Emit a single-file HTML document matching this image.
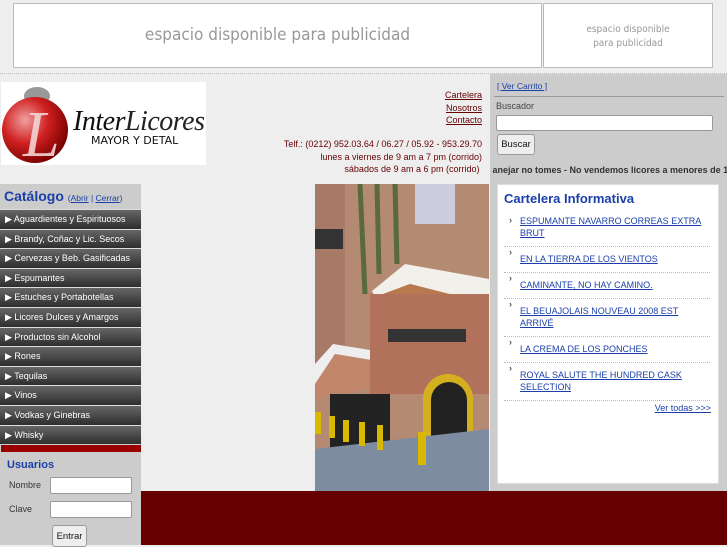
<!DOCTYPE html>
<html><head><meta charset="utf-8"><style>
*{margin:0;padding:0;box-sizing:border-box}
body{width:727px;height:545px;overflow:hidden;background:#eeeeee;font-family:"Liberation Sans",sans-serif;position:relative;font-size:9px}
.abs{position:absolute}
.ban{background:#fff;border:1px solid #bbb;color:#999;text-align:center;font-family:"DejaVu Sans Condensed","Liberation Sans Narrow",sans-serif}
.menu div{height:19.6px;border-top:1px solid #ddd;background:linear-gradient(#666,#2e2e2e);color:#fff;font-size:9px;line-height:18px;padding-left:5px;white-space:nowrap}
.hl{color:#660000;text-decoration:underline;font-size:9px}
.news li{list-style:none;position:relative;padding:0 0 0 16px;border-bottom:1px dotted #bbb;font-size:9px;line-height:12px;color:#1a3fa8;text-decoration:underline}
.news li:before{content:"›";position:absolute;left:5px;top:-1px;color:#555;font-weight:bold;display:inline-block;text-decoration:none}
input.t{background:#fff;border:1px solid #999;border-radius:2px}
.btn{background:#eee;border:1px solid #999;border-radius:3px;font-size:9.5px;text-align:center;color:#111}
</style></head><body>
<div class="abs ban" style="left:13px;top:3px;width:529px;height:65px;font-size:17px;line-height:63px">espacio disponible para publicidad</div>
<div class="abs ban" style="left:543px;top:3px;width:170px;height:65px;font-size:10px;line-height:14px;padding-top:19px">espacio disponible<br>para publicidad</div>
<div class="abs" style="left:0;top:73px;width:727px;border-top:1px dotted #bbb"></div>
<div class="abs" style="left:490px;top:74px;width:237px;height:418px;background:#cccccc"></div>
<div class="abs" style="left:497px;top:81px;font-size:8.5px;color:#1a3fa8;text-decoration:underline">[ Ver Carrito ]</div>
<div class="abs" style="left:494px;top:96px;width:230px;border-top:1px solid #999"></div>
<div class="abs" style="left:496px;top:101px;font-size:9px;color:#444">Buscador</div>
<input class="abs t" style="left:496px;top:115px;width:217px;height:16px">
<div class="abs btn" style="left:497px;top:134px;width:38px;height:21px;line-height:20px">Buscar</div>
<div class="abs" style="left:490px;top:165px;width:237px;overflow:hidden;white-space:nowrap;font-size:9px;font-weight:bold;color:#333">&nbsp;anejar no tomes - No vendemos licores a menores de 18</div>

<div class="abs" style="left:1px;top:82px;width:205px;height:83px;background:#fff;overflow:hidden">
<svg width="205" height="83"><defs><radialGradient id="g" cx="0.35" cy="0.35" r="0.7"><stop offset="0" stop-color="#f0a0a0"/><stop offset="0.5" stop-color="#d02020"/><stop offset="1" stop-color="#700"/></radialGradient></defs>
<ellipse cx="36" cy="14" rx="13" ry="9" fill="#999"/><circle cx="34" cy="48" r="33" fill="url(#g)"/>
<text x="22" y="74" font-family="Liberation Serif" font-size="66" font-style="italic" fill="#f4d4d4" opacity=".9">L</text>
<text x="72" y="48" font-family="Liberation Serif" font-style="italic" font-size="28" fill="#111" textLength="132">Inter<tspan fill="#222">Licores</tspan></text>
<text x="90" y="62" font-family="DejaVu Sans" font-size="11" fill="#111">MAYOR Y DETAL</text></svg></div>
<div class="abs" style="right:245px;top:89px;text-align:right;line-height:12.5px"><div class="hl">Cartelera</div><div class="hl">Nosotros</div><div class="hl">Contacto</div></div>
<div class="abs" style="right:245px;top:138px;text-align:right;line-height:12.5px;font-size:9px;color:#660000">Telf.: (0212) 952.03.64 / 06.27 / 05.92 - 953.29.70<br>lunes a viernes de 9 am a 7 pm (corrido)<br>sábados de 9 am a 6 pm (corrido)&nbsp;</div>

<div class="abs" style="left:0;top:184px;width:141px;height:361px;background:#cccccc"></div>
<div class="abs" style="left:4px;top:188px;font-size:14px;font-weight:bold;color:#1a3fa8">Catálogo <span style="font-size:8.5px;font-weight:normal;color:#1a3fa8">(<u>Abrir</u> | <u>Cerrar</u>)</span></div>
<div class="abs menu" style="left:0;top:209px;width:141px">
<div>▶ Aguardientes y Espirituosos</div><div>▶ Brandy, Coñac y Lic. Secos</div><div>▶ Cervezas y Beb. Gasificadas</div><div>▶ Espumantes</div><div>▶ Estuches y Portabotellas</div><div>▶ Licores Dulces y Amargos</div><div>▶ Productos sin Alcohol</div><div>▶ Rones</div><div>▶ Tequilas</div><div>▶ Vinos</div><div>▶ Vodkas y Ginebras</div><div>▶ Whisky</div></div>
<div class="abs" style="left:1px;top:445px;width:140px;height:7px;background:#990000"></div>
<div class="abs" style="left:7px;top:459px;font-size:11px;font-weight:bold;color:#1a3fa8">Usuarios</div>
<div class="abs" style="left:9px;top:480px;font-size:9px;color:#333">Nombre</div>
<input class="abs t" style="left:50px;top:477px;width:82px;height:17px">
<div class="abs" style="left:9px;top:504px;font-size:9px;color:#333">Clave</div>
<input class="abs t" style="left:50px;top:501px;width:82px;height:17px">
<div class="abs btn" style="left:52px;top:525px;width:35px;height:22px;line-height:21px">Entrar</div>

<div class="abs" style="left:315px;top:184px;width:174px;height:307px;overflow:hidden;background:#a8806c">
<svg width="174" height="307">
<rect width="174" height="307" fill="#b58a72"/>
<rect x="0" y="0" width="30" height="180" fill="#a67a66"/>
<rect x="0" y="45" width="28" height="20" fill="#333"/>
<rect x="100" y="0" width="40" height="40" fill="#ccd"/>
<path d="M45 0 L50 110 M62 0 L64 90 M80 0 L82 80" stroke="#5a6a40" stroke-width="5"/>
<polygon points="57,107 90,80 174,95 174,120 95,100 60,113" fill="#f2f0ea"/>
<polygon points="60,113 95,100 174,120 174,140 105,110" fill="#b8794e"/>
<polygon points="0,180 18,160 110,175 110,185 20,170 0,200" fill="#eee"/>
<polygon points="0,200 20,170 110,185 80,200 0,215" fill="#c2866a"/>
<rect x="55" y="110" width="119" height="100" fill="#b2715a"/>
<rect x="15" y="210" width="60" height="65" fill="#222"/>
<rect x="108" y="190" width="50" height="90" rx="25" fill="#d4b020"/>
<rect x="116" y="198" width="36" height="85" rx="18" fill="#222"/>
<rect x="73" y="145" width="78" height="13" fill="#333"/>
<polygon points="0,265 174,245 174,307 0,307" fill="#7d8ca0"/>
<g fill="#d9b800"><rect x="0" y="228" width="6" height="22"/><rect x="14" y="232" width="6" height="22"/><rect x="28" y="236" width="6" height="22"/><rect x="44" y="238" width="6" height="24"/><rect x="62" y="241" width="6" height="25"/><rect x="103" y="248" width="8" height="33"/></g>
</svg></div>

<div class="abs" style="left:497px;top:184px;width:222px;height:300px;background:#fff;border:1px solid #ddd"></div>
<div class="abs" style="left:504px;top:191px;font-size:13px;font-weight:bold;color:#1a3fa8">Cartelera Informativa</div>
<ul class="abs news" style="left:504px;top:215px;width:206px">
<li style="height:32px;padding-top:0">ESPUMANTE NAVARRO CORREAS EXTRA BRUT</li>
<li style="height:26px;padding-top:6px">EN LA TIERRA DE LOS VIENTOS</li>
<li style="height:26px;padding-top:6px">CAMINANTE, NO HAY CAMINO.</li>
<li style="height:38px;padding-top:6px">EL BEUAJOLAIS NOUVEAU 2008 EST ARRIVÉ</li>
<li style="height:26px;padding-top:6px">LA CREMA DE LOS PONCHES</li>
<li style="height:38px;padding-top:6px">ROYAL SALUTE THE HUNDRED CASK SELECTION</li>
</ul>
<div class="abs" style="right:16px;top:403px;font-size:9px;color:#1a3fa8;text-decoration:underline">Ver todas &gt;&gt;&gt;</div>

<div class="abs" style="left:141px;top:491px;width:586px;height:54px;background:#660000"></div>
</body></html>
